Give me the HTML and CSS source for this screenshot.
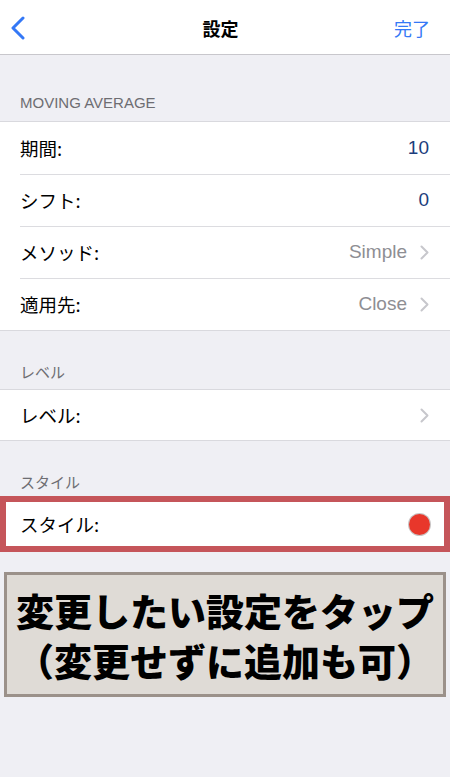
FILE: index.html
```html
<!DOCTYPE html>
<html lang="ja">
<head>
  <meta charset="UTF-8">
  <title>設定</title>
  <link rel="stylesheet" href="styles.css">
</head>
<body>
  <div class="navbar">
    <svg class="back" width="14" height="24" viewBox="0 0 14 24">
      <path d="M12 2 L2 12 L12 22" fill="none" stroke="#3478f6" stroke-width="3" stroke-linecap="round" stroke-linejoin="round"/>
    </svg>
    <div class="title">設定</div>
    <div class="done">完了</div>
  </div>

  <div class="section-header first">MOVING AVERAGE</div>
  <div class="group">
    <div class="row">
      <span class="label">期間:</span>
      <span class="value number">10</span>
    </div>
    <div class="row">
      <span class="label">シフト:</span>
      <span class="value number">0</span>
    </div>
    <div class="row">
      <span class="label">メソッド:</span>
      <span class="value">Simple</span>
      <svg class="chev" width="9" height="15" viewBox="0 0 9 15"><path d="M1.5 1.5 L7.5 7.5 L1.5 13.5" fill="none" stroke="#c7c7cc" stroke-width="2" stroke-linecap="round" stroke-linejoin="round"/></svg>
    </div>
    <div class="row">
      <span class="label">適用先:</span>
      <span class="value">Close</span>
      <svg class="chev" width="9" height="15" viewBox="0 0 9 15"><path d="M1.5 1.5 L7.5 7.5 L1.5 13.5" fill="none" stroke="#c7c7cc" stroke-width="2" stroke-linecap="round" stroke-linejoin="round"/></svg>
    </div>
  </div>

  <div class="section-header level">レベル</div>
  <div class="group">
    <div class="row short">
      <span class="label">レベル:</span>
      <svg class="chev" width="9" height="15" viewBox="0 0 9 15"><path d="M1.5 1.5 L7.5 7.5 L1.5 13.5" fill="none" stroke="#c7c7cc" stroke-width="2" stroke-linecap="round" stroke-linejoin="round"/></svg>
    </div>
  </div>

  <div class="section-header style">スタイル</div>
  <div class="highlight">
    <span class="label">スタイル:</span>
    <span class="dot"></span>
  </div>

  <div class="note">
    <div>変更したい設定をタップ</div>
    <div>（変更せずに追加も可）</div>
  </div>
</body>
</html>
```

FILE: styles.css
```css
body {
  margin: 0;
  padding: 0;
  background: #efeff4;
  font-family: "Liberation Sans", "Noto Sans CJK JP", sans-serif;
  color: #000;
}
.navbar {
  height: 54px;
  background: #fff;
  border-bottom: 1px solid #c8c7cc;
  display: flex;
  align-items: center;
  justify-content: space-between;
  padding: 0 20px 0 11px;
}
.back {
  display: block;
  margin-top: 1px;
}
.title {
  font-family: "Noto Sans CJK JP", sans-serif;
  font-weight: 700;
  font-size: 18px;
  line-height: 20px;
  margin-left: 22px;
  margin-top: 2px;
}
.done {
  font-family: "Noto Sans CJK JP", sans-serif;
  font-size: 18px;
  line-height: 20px;
  color: #3478f6;
  margin-top: 1px;
}
.section-header {
  font-size: 15px;
  line-height: 18px;
  color: #6d6d72;
  padding: 0 20px;
  font-family: "Liberation Sans", "Noto Sans CJK JP", sans-serif;
}
.section-header.first {
  padding-top: 39px;
  padding-bottom: 9px;
}
.section-header.level {
  padding-top: 32px;
  padding-bottom: 8px;
  font-family: "Noto Sans CJK JP", sans-serif;
}
.section-header.style {
  padding-top: 32px;
  padding-bottom: 5px;
  font-family: "Noto Sans CJK JP", sans-serif;
}
.group {
  background: #fff;
  border-top: 1px solid #d9d9de;
  border-bottom: 1px solid #d9d9de;
}
.row {
  height: 52px;
  display: flex;
  align-items: center;
  padding: 0 21px 0 20px;
  position: relative;
}
.row.short {
  height: 50px;
}
.row + .row::before {
  content: "";
  position: absolute;
  top: 0;
  left: 20px;
  right: 0;
  border-top: 1px solid #dcdce0;
}
.label {
  font-family: "Noto Sans CJK JP", sans-serif;
  font-size: 18.5px;
  line-height: 22px;
  flex: 1;
}
.value {
  font-size: 19px;
  line-height: 22px;
  color: #8e8e93;
}
.value.number {
  color: #1c3d7c;
}
.chev {
  display: block;
  margin-left: 13px;
}
.highlight {
  height: 44px;
  background: #fff;
  border: 6px solid #c5555a;
  display: flex;
  align-items: center;
  padding: 0 14px;
}
.dot {
  width: 21px;
  height: 21px;
  border-radius: 50%;
  background: #e8372b;
  box-shadow: 0 0 0 1px #c9c4c4;
}
.note {
  margin: 20px 4px 0;
  height: 119px;
  border: 3px solid #9b918a;
  background: #dfdbd6;
  display: flex;
  flex-direction: column;
  justify-content: center;
  align-items: center;
  font-family: "Noto Sans CJK JP", sans-serif;
  font-weight: 900;
  font-size: 38px;
  line-height: 50px;
  color: #000;
}
```
